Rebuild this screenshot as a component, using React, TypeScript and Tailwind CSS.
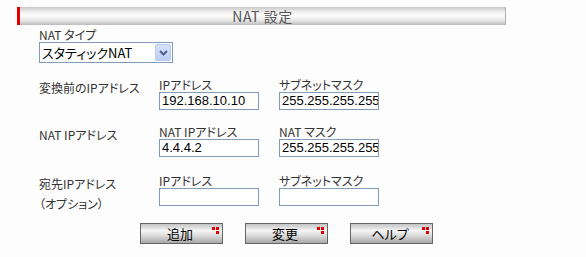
import React from 'react';

const jp = "font-['Noto_Sans_CJK_JP','Liberation_Sans',sans-serif] [font-feature-settings:'palt']";
const num = "font-['Liberation_Sans','Noto_Sans_CJK_JP',sans-serif]";

const Field: React.FC<{ label: string; value?: string }> = ({ label, value = '' }) => (
  <div>
    <div className={`${jp} text-[12px] leading-[15px] text-[#333]`}>{label}</div>
    <div
      className={`${num} w-[100px] h-[18px] border border-[#7f9db9] bg-white text-[13px] leading-[16px] text-black pl-[2px] overflow-hidden whitespace-nowrap`}
    >
      {value}
    </div>
  </div>
);

const RedDots = () => (
  <div className="absolute top-[3px] right-[3px] w-[7px] h-[7px]">
    <span className="absolute left-0 top-0 w-[3px] h-[3px] bg-[#e00000]" />
    <span className="absolute left-[4px] top-0 w-[3px] h-[3px] bg-[#e00000]" />
    <span className="absolute left-[4px] top-[4px] w-[3px] h-[3px] bg-[#e00000]" />
  </div>
);

const MetalButton: React.FC<{ label: string }> = ({ label }) => (
  <button className="relative w-[83px] h-[21px] border border-[#666] bg-[linear-gradient(to_bottom,#c4c4c4_0%,#f6f6f6_35%,#dcdcdc_60%,#a8a8a8_100%)] flex items-center justify-center">
    <span className={`${jp} text-[13px] leading-[15px] text-black -ml-[3px]`}>{label}</span>
    <RedDots />
  </button>
);

const App: React.FC = () => {
  return (
    <div className="w-[586px] h-[257px] bg-[#fcfdfc] overflow-hidden">
      {/* title bar */}
      <div className="ml-[17px] mt-[7px] w-[489px] h-[18px] border-l-[3px] border-l-[#e00000] border-r border-r-[#b0b0b0] bg-[linear-gradient(to_bottom,#c8c8c8_0%,#f2f2f2_30%,#fbfbfb_50%,#e6e6e6_75%,#bcbcbc_100%)] flex items-center justify-center">
        <span className={`${jp} text-[14px] leading-[16px] text-[#555] tracking-[0.5px]`}>NAT 設定</span>
      </div>

      <div className="pl-[39px]">
        <div className={`${jp} mt-[3px] text-[12px] leading-[14px] text-[#333]`}>NAT タイプ</div>

        <div className="w-[134px] h-[21px] border border-[#7f9db9] bg-white flex items-center justify-between pl-[2px] pr-[1px]">
          <span className={`${jp} text-[13px] leading-[15px] text-black`}>スタティックNAT</span>
          <div className="w-[16px] h-[17px] rounded-[2px] border border-[#b7c9f0] bg-[linear-gradient(to_bottom,#d6e2fc,#bccdf6)] flex items-center justify-center">
            <svg width="9" height="6" viewBox="0 0 9 6">
              <polyline points="1,1 4.5,4.5 8,1" fill="none" stroke="#4d6185" strokeWidth="2" />
            </svg>
          </div>
        </div>

        <div className="mt-[14px] grid grid-cols-[120px_120px_auto]">
          <div className={`${jp} pt-[3px] text-[12px] leading-[15px] text-[#333]`}>変換前のIPアドレス</div>
          <Field label="IPアドレス" value="192.168.10.10" />
          <Field label="サブネットマスク" value="255.255.255.255" />
        </div>

        <div className="mt-[14px] grid grid-cols-[120px_120px_auto]">
          <div className={`${jp} pt-[3px] text-[12px] leading-[15px] text-[#333]`}>NAT IPアドレス</div>
          <Field label="NAT IPアドレス" value="4.4.4.2" />
          <Field label="NAT マスク" value="255.255.255.255" />
        </div>

        <div className="mt-[16px] grid grid-cols-[120px_120px_auto]">
          <div className={`${jp} pt-[3px] text-[12px] leading-[15px] text-[#333]`}>
            <div>宛先IPアドレス</div>
            <div className="mt-[5px]">（オプション）</div>
          </div>
          <Field label="IPアドレス" />
          <Field label="サブネットマスク" />
        </div>

        <div className="mt-[12px] ml-[101px] flex gap-[22px]">
          <MetalButton label="追加" />
          <MetalButton label="変更" />
          <MetalButton label="ヘルプ" />
        </div>
      </div>
    </div>
  );
};

export default App;
